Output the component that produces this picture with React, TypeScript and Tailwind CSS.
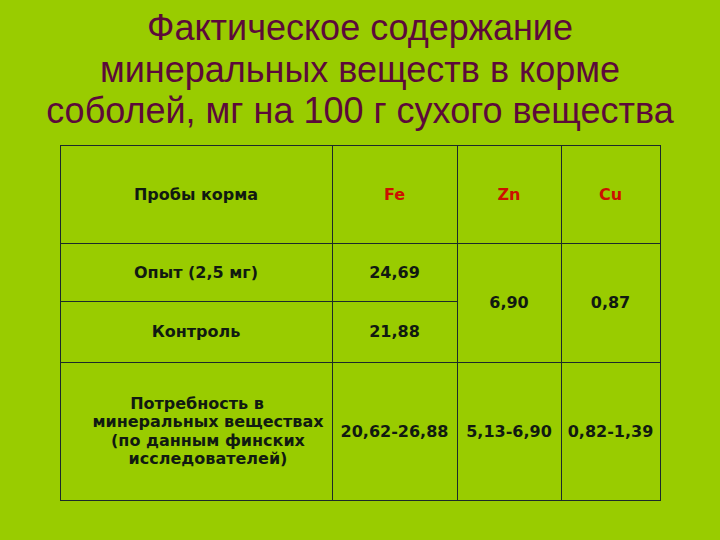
import React from "react";

export default function App() {
  const cell = "border border-[#1c2a2a] text-center align-middle p-0";
  return (
    <div className="w-[720px] h-[540px] bg-[#99cc00] overflow-hidden flex flex-col items-center">
      <h1 className="mt-[7px] text-[36px] leading-[41.5px] text-[#5c0a3a] text-center font-normal whitespace-nowrap" style={{ fontFamily: '"Liberation Sans", Arial, sans-serif' }}>
        Фактическое содержание
        <br />
        минеральных веществ в корме
        <br />
        соболей, мг на 100 г сухого вещества
      </h1>
      <table
        className="mt-[13.5px] border-collapse text-[16px] font-bold text-[#111a11] table-fixed"
        style={{ fontFamily: '"DejaVu Sans", Verdana, sans-serif' }}
      >
        <colgroup>
          <col className="w-[272px]" />
          <col className="w-[125px]" />
          <col className="w-[104px]" />
          <col className="w-[99px]" />
        </colgroup>
        <tbody>
          <tr className="h-[98px]">
            <td className={cell}>Пробы корма</td>
            <td className={cell + " text-[#cc1100]"}>Fe</td>
            <td className={cell + " text-[#cc1100]"}>Zn</td>
            <td className={cell + " text-[#cc1100]"}>Cu</td>
          </tr>
          <tr className="h-[58px]">
            <td className={cell}>Опыт (2,5 мг)</td>
            <td className={cell}>24,69</td>
            <td className={cell} rowSpan={2}>6,90</td>
            <td className={cell} rowSpan={2}>0,87</td>
          </tr>
          <tr className="h-[61px]">
            <td className={cell}>Контроль</td>
            <td className={cell}>21,88</td>
          </tr>
          <tr className="h-[138px]">
            <td className={cell + " leading-[18.5px] pl-[24px]"}>
              <span className="inline-block pr-[22px]">Потребность в</span>
              <br />
              минеральных веществах
              <br />
              (по данным финских
              <br />
              исследователей)
            </td>
            <td className={cell + " whitespace-nowrap"}>20,62-26,88</td>
            <td className={cell + " whitespace-nowrap"}>5,13-6,90</td>
            <td className={cell + " whitespace-nowrap"}>0,82-1,39</td>
          </tr>
        </tbody>
      </table>
    </div>
  );
}
